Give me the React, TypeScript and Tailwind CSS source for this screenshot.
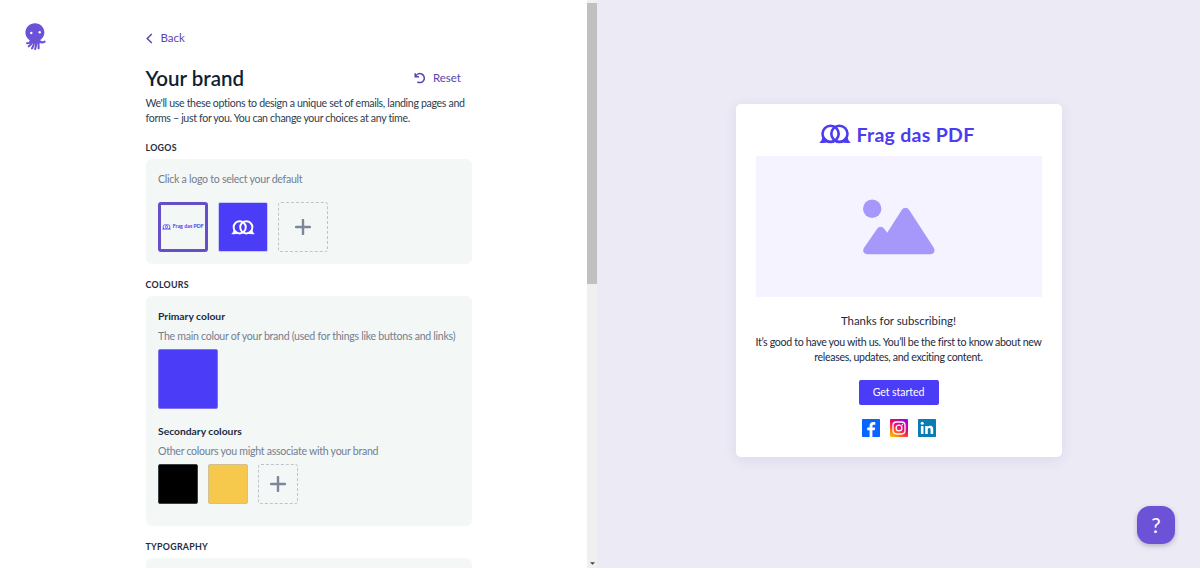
import type { ReactNode } from "react";

function Octopus() {
  return (
    <svg viewBox="0 0 21 28" className="h-7 w-[21px]" fill="none">
      <path
        d="M10 0.2C4.700 0.2 0.400 4.300 0.400 9.600c0 3.600 1.800 6 4.200 7.600l-.6 3.200h11.400l-.4-3.200c2.400-1.600 4.400-4 4.400-7.600C19.400 4.300 15.300.2 10 .2z"
        fill="#6b52d6"
      />
      <g stroke="#6b52d6" strokeWidth="2.100" strokeLinecap="round">
        <path d="M6 18.500c-1 1.400-2.300 1.900-4 1.700" />
        <path d="M7 19c-.5 2-1.500 3.500-3.200 4.300" />
        <path d="M9 19c0 2.500-.6 4.500-2 6.300" />
        <path d="M11 19c.2 2.500 0 5-.9 7" />
        <path d="M13 19c.7 2.500.9 4.500.6 6.300" />
        <path d="M14 17.500c1.500 2 3.500 2.500 5.600 1.200" />
      </g>
      <circle cx="6.300" cy="10" r="1.200" fill="white" />
      <circle cx="14.700" cy="9.200" r="1.200" fill="white" />
    </svg>
  );
}

// two overlapping speech bubbles
function Bubbles({ className }: { className: string }) {
  return (
    <svg viewBox="0 0 32 20" className={className} fill="none" stroke="currentColor" strokeWidth="2.600">
      <circle cx="11.600" cy="9.800" r="8.100" />
      <circle cx="20.400" cy="9.800" r="8.100" />
      <path d="M3.200 13.500c0 2-1 3.700-3 5.200 3.500.7 6.800.4 9.300-.7L6.500 14z" fill="currentColor" stroke="none" />
      <path d="M28.800 13.500c0 2 1 3.700 3 5.200-3.500.7-6.800.4-9.300-.7l3-4z" fill="currentColor" stroke="none" />
    </svg>
  );
}

function Plus() {
  return (
    <svg viewBox="0 0 16 16" className="size-4" stroke="#7c879a" strokeWidth="2.400" strokeLinecap="round">
      <path d="M8 1v14M1 8h14" />
    </svg>
  );
}

function SectionTitle({ children }: { children: ReactNode }) {
  return (
    <h2 className="h-[15px] text-[8.800px] leading-[15px] font-bold tracking-[0.300px] text-[#1b2b41]">{children}</h2>
  );
}

function Hint({ children }: { children: ReactNode }) {
  return <p className="text-[10.600px] leading-[15px] tracking-[-0.280px] whitespace-nowrap text-[#747e8e]">{children}</p>;
}

function BrandPanel() {
  return (
    <div className="w-[326px] shrink-0 pt-7">
      <a className="flex h-5 items-center text-[11.500px] text-[#5b45b0]">
        <svg viewBox="0 0 7 11" className="mr-2 h-[11px] w-[7px]" fill="none" stroke="currentColor" strokeWidth="1.500">
          <path d="M5.800 1 1.200 5.500l4.600 4.500" />
        </svg>
        Back
      </a>

      <div className="mt-[14px] flex h-8 items-center justify-between pr-[10.500px]">
        <h1 className="text-[20.500px] font-semibold text-[#0f1f35]">Your brand</h1>
        <button className="flex items-center text-[11.500px] text-[#5b45b0]">
          <svg viewBox="0 0 12 12" className="mr-[7px] size-3" fill="none" stroke="currentColor" strokeWidth="1.500">
            <path d="M1.200 1.200v3.600h3.800M1.600 4.500A4.500 4.500 0 1 1 3.300 9.800" />
          </svg>
          Reset
        </button>
      </div>

      <p className="mt-[2px] text-[10.600px] leading-[15px] tracking-[-0.330px] whitespace-nowrap text-[#2e3d50]">
        We'll use these options to design a unique set of emails, landing pages and
        <br />
        forms – just for you. You can change your choices at any time.
      </p>

      <div className="mt-[14px]">
        <SectionTitle>LOGOS</SectionTitle>
      </div>
      <section className="mt-1 h-[105px] rounded-md bg-[#f3f7f6] px-[12.500px] pt-[13px]">
        <Hint>Click a logo to select your default</Hint>
        <div className="mt-[15px] flex gap-[10px]">
          <div className="flex size-[50px] items-center justify-center gap-[1.500px] rounded-[3px] border-3 border-[#674fc7] text-[#4b3cf5]">
            <Bubbles className="h-[6px] w-[9px]" />
            <span className="text-[5.300px] font-bold whitespace-nowrap">Frag das PDF</span>
          </div>
          <div className="flex size-[50px] items-center justify-center rounded-[2px] border border-[#c9cbf7] bg-[#4b3cf7] text-white">
            <Bubbles className="h-[15px] w-6" />
          </div>
          <div className="flex size-[50px] items-center justify-center rounded-[3px] border border-dashed border-[#bdc4cc]">
            <Plus />
          </div>
        </div>
      </section>

      <div className="mt-[12.500px]">
        <SectionTitle>COLOURS</SectionTitle>
      </div>
      <section className="mt-1 h-[230.500px] rounded-md bg-[#f3f7f6] px-[12.500px] pt-[13px]">
        <h3 className="text-[10.300px] leading-[15px] font-bold text-[#1b2b41]">Primary colour</h3>
        <div className="mt-[5px]">
          <Hint>The main colour of your brand (used for things like buttons and links)</Hint>
        </div>
        <div className="mt-[5px] size-[60px] rounded-[2px] border border-[#7e74ee] bg-[#4b3cf7]" />

        <h3 className="mt-[15px] text-[10.300px] leading-[15px] font-bold text-[#1b2b41]">Secondary colours</h3>
        <div className="mt-[5px]">
          <Hint>Other colours you might associate with your brand</Hint>
        </div>
        <div className="mt-[5px] flex gap-[10px]">
          <div className="size-10 rounded-[2px] border border-[#3a3f45] bg-black" />
          <div className="size-10 rounded-[2px] border border-[#d0c194] bg-[#f6c84c]" />
          <div className="flex size-[40px] items-center justify-center rounded-[3px] border border-dashed border-[#bdc4cc]">
            <Plus />
          </div>
        </div>
      </section>

      <div className="mt-[12.500px]">
        <SectionTitle>TYPOGRAPHY</SectionTitle>
      </div>
      <section className="mt-1 h-40 rounded-md bg-[#f3f7f6]" />
    </div>
  );
}

function Scrollbar() {
  return (
    <div className="flex h-full w-[10px] flex-col items-center justify-between bg-[#f0f0f0] pt-[3px] pb-[3px]">
      <div className="h-[281px] w-full bg-[#c0c0c0]" />
      <svg viewBox="0 0 6 3" className="h-[3px] w-[5px]">
        <path d="M0 0h6L3 3z" fill="#404040" />
      </svg>
    </div>
  );
}

function Socials() {
  return (
    <div className="mt-[14px] flex gap-[10px]">
      <svg viewBox="0 0 18 18" className="size-[18px]">
        <rect width="18" height="18" rx="0.800" fill="#0866ff" />
        <path
          d="M7.600 18v-6.700H5.200V8.500h2.400V6.800c0-2.400 1.400-3.700 3.600-3.700.9 0 1.600.1 2.100.2v2.400h-1.400c-1.100 0-1.500.6-1.500 1.500v1.300h2.800l-.5 2.800h-2.300V18z"
          fill="white"
        />
      </svg>
      <svg viewBox="0 0 18 18" className="size-[18px]" fill="none">
        <defs>
          <linearGradient id="ig" x1="2" y1="18" x2="14" y2="0" gradientUnits="userSpaceOnUse">
            <stop offset="0" stopColor="#ffc400" />
            <stop offset="0.300" stopColor="#ff5a1f" />
            <stop offset="0.600" stopColor="#e8057c" />
            <stop offset="1" stopColor="#a800e0" />
          </linearGradient>
        </defs>
        <rect width="18" height="18" rx="0.800" fill="url(#ig)" />
        <g stroke="white" strokeWidth="1.300">
          <rect x="3" y="3" width="12" height="12" rx="3.400" />
          <circle cx="9" cy="9" r="2.900" />
        </g>
        <circle cx="12.400" cy="5.600" r="0.800" fill="white" />
      </svg>
      <svg viewBox="0 0 18 18" className="size-[18px]" fill="white">
        <rect width="18" height="18" rx="0.800" fill="#0a7bb5" />
        <circle cx="4.200" cy="4.300" r="1.500" />
        <path d="M2.900 7h2.600v8H2.900zM7.200 7h2.500v1.100c.4-.8 1.300-1.300 2.500-1.300 2.400 0 3 1.500 3 3.800V15h-2.600v-3.900c0-1.100-.1-2.100-1.300-2.100s-1.500.9-1.500 2V15H7.200z" />
      </svg>
    </div>
  );
}

function EmailPreview() {
  return (
    <div className="flex h-[353px] w-[326px] flex-col items-center rounded-[5px] bg-white px-5 pt-[19px] shadow-[0_3px_14px_rgba(60,50,120,0.090)]">
      <div className="flex h-[22px] items-center pr-[3px] text-[#4b3cf0]">
        <Bubbles className="mr-[5px] h-5 w-8" />
        <span className="pt-[2px] text-[19.500px] leading-[22px] font-bold tracking-[0.300px] whitespace-nowrap">
          Frag das PDF
        </span>
      </div>
      <div className="mt-[11px] flex h-[141px] w-[286px] items-center justify-center bg-[#f5f3ff]">
        <svg viewBox="0 0 72 56" className="h-14 w-[72px]" fill="#a598fa">
          <circle cx="9.200" cy="9.700" r="9.200" />
          <path d="M14.200 29.800c2-2.700 5-2.700 7 0l3 4 14.500-22.700c2.200-3 5.400-3 7.500 0L70.600 48.500c2 3.200.6 6.700-3.600 6.700H5c-4.200 0-6.200-3.200-3.800-6.700z" />
        </svg>
      </div>
      <h2 className="mt-4 text-[11.400px] leading-4 text-[#1b2b41]">Thanks for subscribing!</h2>
      <p className="mt-[6px] text-center text-[10.600px] leading-[15px] tracking-[-0.320px] whitespace-nowrap text-[#1b2b41]">
        It’s good to have you with us. You’ll be the first to know about new
        <br />
        releases, updates, and exciting content.
      </p>
      <button className="mt-[15px] h-[25px] w-20 shrink-0 rounded-[2px] bg-[#4b3cf7] text-[10.600px] tracking-[-0.100px] text-white">
        Get started
      </button>
      <Socials />
    </div>
  );
}

export default function App() {
  return (
    <main className="relative flex h-[568px] w-[1200px] overflow-hidden bg-white font-[Lato,sans-serif]">
      <div className="flex h-full w-[587px] overflow-hidden">
        <div className="w-[145.500px] shrink-0 pt-[23px] pl-[25px]">
          <Octopus />
        </div>
        <BrandPanel />
      </div>
      <Scrollbar />
      <div className="flex flex-1 justify-center bg-[#eceaf5] pt-[104px]">
        <EmailPreview />
      </div>
      <button className="absolute right-[25px] bottom-6 flex size-[38px] items-center justify-center rounded-[13px] bg-[#6b52d6] text-[21px] font-normal text-white shadow-[0_2px_5px_rgba(60,50,90,0.300)]">
        ?
      </button>
    </main>
  );
}
